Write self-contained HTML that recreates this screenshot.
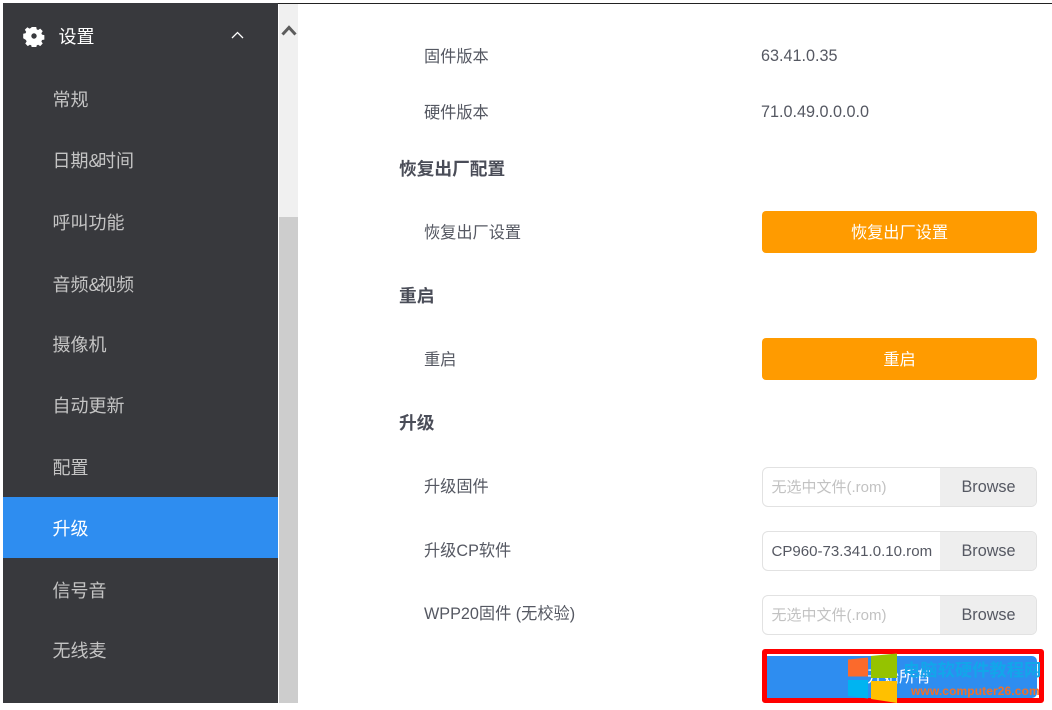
<!DOCTYPE html>
<html><head><meta charset="utf-8"><style>
*{box-sizing:border-box}
html,body{margin:0;padding:0;width:1052px;height:710px;overflow:hidden;background:#fff;font-family:"Liberation Sans","Noto Sans CJK SC",sans-serif}
.a{position:absolute;white-space:nowrap}
#side{left:3px;top:3px;width:275px;height:700px;background:#38393d}
.m{left:52.5px;font-size:18px;line-height:24px;color:#c4c4c4;letter-spacing:0}
.m i{font-style:normal;letter-spacing:-2.500px}
.l{left:424px;font-size:16.200px;line-height:22px;color:#555862}
.h{left:399px;font-size:17.700px;line-height:24px;font-weight:bold;color:#4a4d58}
.v{left:761px;font-size:16.200px;line-height:22px;color:#555862}
.btn{left:762px;width:275px;height:42px;background:#ff9b00;border-radius:4px;color:#fff;font-size:16.200px;line-height:44px;text-align:center}
.f{left:762px;width:275px;height:40px;border:1px solid #e2e2e2;border-radius:6px;background:#fff;overflow:hidden}
.f span{position:absolute;left:8.500px;top:0;line-height:40px;font-size:15px;color:#555862;white-space:nowrap}
.f span.p{color:#c2c2c2}
.f b{position:absolute;left:177px;top:0;width:97px;height:38px;background:#eeeeee;font-weight:normal;font-size:16.200px;line-height:38px;text-align:center;color:#555862}
</style></head><body>
<div class="a" style="left:278px;top:3px;width:774px;height:1px;background:#222"></div>
<div class="a" id="side"></div>
<svg class="a" style="left:23px;top:25px" width="22" height="22" viewBox="0 0 22 22"><path fill="#fff" fill-rule="evenodd" d="M8.500 1h5l.5 2.600 1.600.7 2.300-1.500 2.800 2.800-1.500 2.300.7 1.600 2.600.5v5l-2.600.5-.7 1.600 1.500 2.300-2.800 2.800-2.300-1.500-1.600.7-.5 2.600h-5l-.5-2.600-1.600-.7-2.300 1.500-2.800-2.800 1.500-2.300-.7-1.600L-1 13.500v-5l2.600-.5.7-1.600-1.500-2.300 2.800-2.800 2.300 1.500 1.600-.7zM11 8a3 3 0 1 0 0 6 3 3 0 0 0 0-6z" transform="translate(1.100 1.100) scale(.9)"/></svg>
<div class="a" style="left:58.500px;top:25px;font-size:18px;line-height:24px;color:#fff">设置</div>
<svg class="a" style="left:230px;top:30px" width="15" height="10" viewBox="0 0 15 10"><path d="M2 8l5.500-5.500L13 8" fill="none" stroke="#fff" stroke-width="1.300"/></svg>
<div class="a m" style="top:88px">常规</div>
<div class="a m" style="top:149px">日期<i>&amp;</i>时间</div>
<div class="a m" style="top:211px">呼叫功能</div>
<div class="a m" style="top:273px">音频<i>&amp;</i>视频</div>
<div class="a m" style="top:333px">摄像机</div>
<div class="a m" style="top:394px">自动更新</div>
<div class="a m" style="top:456px">配置</div>
<div class="a" style="left:3px;top:497px;width:275px;height:61px;background:#2e8df0"></div>
<div class="a m" style="top:517px;color:#fff">升级</div>
<div class="a m" style="top:579px">信号音</div>
<div class="a m" style="top:639px">无线麦</div>
<div class="a" style="left:279px;top:4px;width:19px;height:699px;background:#f0f0f0"></div>
<div class="a" style="left:279px;top:217px;width:19px;height:486px;background:#cdcdcd"></div>
<svg class="a" style="left:281px;top:24px" width="16" height="13" viewBox="0 0 16 13"><path d="M1.500 10.500L8 3.500l6.500 7" fill="none" stroke="#5c5c5c" stroke-width="3"/></svg>
<div class="a l" style="top:46px">固件版本</div>
<div class="a v" style="top:45px">63.41.0.35</div>
<div class="a l" style="top:102px">硬件版本</div>
<div class="a v" style="top:101px">71.0.49.0.0.0.0</div>
<div class="a h" style="top:157px">恢复出厂配置</div>
<div class="a l" style="top:222px">恢复出厂设置</div>
<div class="a btn" style="top:211px">恢复出厂设置</div>
<div class="a h" style="top:284px">重启</div>
<div class="a l" style="top:349px">重启</div>
<div class="a btn" style="top:338px">重启</div>
<div class="a h" style="top:411px">升级</div>
<div class="a l" style="top:476px">升级固件</div>
<div class="a f" style="top:467px"><span class="p">无选中文件(.rom)</span><b>Browse</b></div>
<div class="a l" style="top:540px">升级CP软件</div>
<div class="a f" style="top:531px"><span style="font-size:15.050px">CP960-73.341.0.10.rom</span><b>Browse</b></div>
<div class="a l" style="top:603px">WPP20固件 (无校验)</div>
<div class="a f" style="top:595px"><span class="p">无选中文件(.rom)</span><b>Browse</b></div>
<div class="a" style="left:762px;top:649px;width:282px;height:54px;background:#fff;border:5px solid #f00;border-radius:3px"></div>
<div class="a" style="left:767px;top:656px;width:270px;height:42px;background:#2e8df0;border-radius:0 5px 5px 0"></div>
<div class="a" style="left:867px;top:667px;font-size:16px;line-height:22px;color:#fff">开始所有</div>
<svg class="a" style="left:846px;top:653px" width="54" height="52" viewBox="0 0 54 52"><path fill="#fb6a2c" d="M2 6.500L22 4.500V23.500H2z"/><path fill="#95c300" d="M25 3L51 .5V25H25z"/><path fill="#00b4f1" d="M2 27H22V45.500L2 43z"/><path fill="#ffc000" d="M25 28H51V50L25 46z"/></svg>
<div class="a" style="left:903px;top:660px;font-size:17.300px;line-height:20px;font-weight:bold;color:#12a6ea">电脑软硬件教程网</div>
<div class="a" style="left:911px;top:684px;font-size:12px;line-height:14px;font-weight:bold;color:#f0702a;letter-spacing:.1px">www.computer26.com</div>
</body></html>
